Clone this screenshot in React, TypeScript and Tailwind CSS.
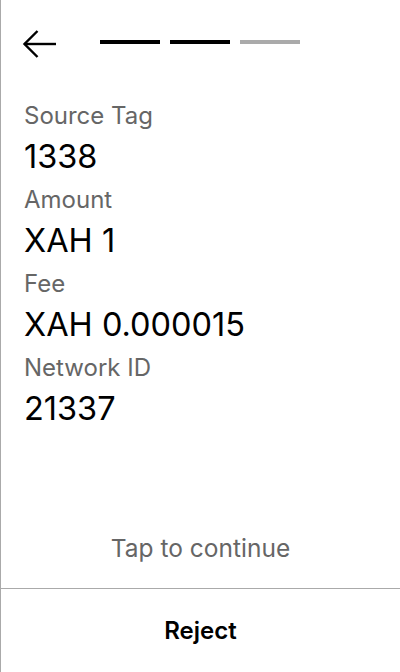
const rows = [
  { label: "Source Tag", value: "1338" },
  { label: "Amount", value: "XAH 1" },
  { label: "Fee", value: "XAH 0.000015" },
  { label: "Network ID", value: "21337" },
];

function BackArrow() {
  return (
    <svg width="36" height="30" viewBox="0 0 36 30" fill="none" stroke="currentColor" strokeWidth="2.4" strokeLinecap="butt" className="mt-[3px]">
      <path d="M15.5 2 L2.5 15 L15.5 28" />
      <path d="M2.5 15 H34" />
    </svg>
  );
}

export default function App() {
  return (
    <div className="h-[672px] w-[400px] flex flex-col bg-white border-l border-[#aaaaaa] font-['Inter',sans-serif] text-black">
      <div className="flex items-center h-[84px] pl-[21px]">
        <BackArrow />
        <div className="flex gap-[10px] ml-[42px]">
          <div className="w-[60px] h-[4px] bg-black" />
          <div className="w-[60px] h-[4px] bg-black" />
          <div className="w-[60px] h-[4px] bg-[#aaaaaa]" />
        </div>
      </div>
      <div className="flex flex-col px-[23px] pt-[15px]">
        {rows.map((r) => (
          <div key={r.label} className="flex flex-col mb-[2px]">
            <span className="text-[24px] leading-[34px] text-[#666666]">{r.label}</span>
            <span className="text-[32.5px] leading-[48px]">{r.value}</span>
          </div>
        ))}
      </div>
      <div className="flex-1" />
      <div className="text-center text-[24.5px] leading-[28px] text-[#666666] mb-[26px]">Tap to continue</div>
      <button className="h-[84px] border-t border-[#aaaaaa] text-[24px] font-semibold">Reject</button>
    </div>
  );
}
